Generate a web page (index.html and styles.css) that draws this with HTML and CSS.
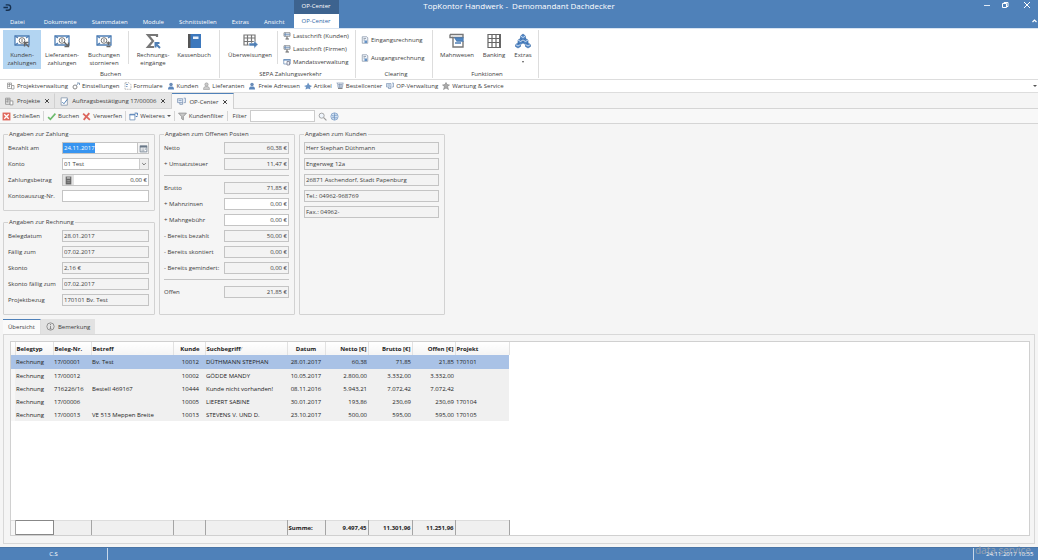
FILE: index.html
```html
<!DOCTYPE html>
<html lang="de">
<head>
<meta charset="utf-8">
<title>TopKontor Handwerk</title>
<link rel="stylesheet" href="styles.css">
</head>
<body>
<svg class="sprite" aria-hidden="true">
  <symbol id="note" viewBox="0 0 16 16"><path d="M1 3h14v9H1z" fill="#fff" stroke="#4f7fb5" stroke-width="1.3"/><path d="M1 3l3 2M15 3l-3 2M1 12l3-2" stroke="#4f7fb5" stroke-width="1.4"/><circle cx="8" cy="7.500" r="2.800" fill="none" stroke="#777"/><path d="M8 6v3" stroke="#777"/></symbol>
  <symbol id="note-in" viewBox="0 0 16 16"><use href="#note"/><path d="M15 14l-4-4M10.500 13.500V9.500h4" fill="none" stroke="#666" stroke-width="1.400"/></symbol>
  <symbol id="note-out" viewBox="0 0 16 16"><use href="#note"/><path d="M10 9l4 4M14.500 9.500v4h-4" fill="none" stroke="#666" stroke-width="1.400"/></symbol>
  <symbol id="note-plus" viewBox="0 0 16 16"><use href="#note"/><path d="M12.500 8.500v3.500M10.500 10h4M10.500 13.500h4" stroke="#666" stroke-width="1.300"/></symbol>
  <symbol id="sigma" viewBox="0 0 16 16"><path d="M12 4V2H3l5 6-5 6h6" fill="none" stroke="#777" stroke-width="2.200"/><path d="M15 15l-4-4M10.500 14.500V10h4" fill="none" stroke="#4f7fb5" stroke-width="2"/></symbol>
  <symbol id="book" viewBox="0 0 16 16"><path d="M2 1h13v14H2z" fill="#3c78bd"/><path d="M2 1h2.500v14H2z" fill="#555"/><path d="M7 3.500h5.500v2.500H7z" fill="#e8f0fa"/></symbol>
  <symbol id="transfer" viewBox="0 0 16 16"><path d="M2 2h11v10H2zM2 5h11M2 8.500h11M5.500 2v10M9.500 2v10" fill="none" stroke="#777" stroke-width="1.200"/><path d="M7 10h5V7.500l4 4-4 4V13H7z" fill="#4f7fb5" stroke="#fff" stroke-width=".5"/></symbol>
  <symbol id="pc" viewBox="0 0 16 16"><path d="M2 1.500h12v7H2z" fill="#dce8f5" stroke="#777" stroke-width="1.500"/><path d="M5 1v8M2 5h12" stroke="#6c8db5" stroke-width="1.300"/><path d="M8 9v4M5 14h7" fill="none" stroke="#666" stroke-width="2.200"/></symbol>
  <symbol id="sheet" viewBox="0 0 16 16"><path d="M1.500 3h13v9h-13z" fill="#fff" stroke="#6c8db5" stroke-width="1.500"/><path d="M1 4h14" stroke="#4f7fb5" stroke-width="2"/><path d="M8 7h5v7H8z" fill="#e9eef5" stroke="#778" stroke-width="1.500"/></symbol>
  <symbol id="invoice" viewBox="0 0 16 16"><path d="M2.500 1.500h9l2 2v11h-11z" fill="#eef3fa" stroke="#8291a5" stroke-width="1.400"/><path d="M5 5h5M5 8h3" stroke="#7d8794" stroke-width="1.400"/><path d="M7 9h5v5H7z" fill="#6592c5"/></symbol>
  <symbol id="dunning" viewBox="0 0 16 16"><path d="M1 1.500h13v3H4V14h10V8" fill="none" stroke="#777" stroke-width="1.400"/><path d="M6 5h8v3H8zM6 10h6" fill="#4f8ac9" stroke="#4f7fb5" stroke-width="1.300"/><path d="M1 1.500v3h3" fill="none" stroke="#777" stroke-width="1.400"/></symbol>
  <symbol id="bank" viewBox="0 0 16 16"><path d="M2 1.500h12v13H2zM2 5.500h12M2 9.500h12M6 1.500v13M10 1.500v13" fill="none" stroke="#666" stroke-width="1.200"/><path d="M14 1v14" stroke="#666" stroke-width="2"/></symbol>
  <symbol id="cubes" viewBox="0 0 16 16"><g fill="#4f86c6" stroke="#3c6ba5" stroke-width=".6"><path d="M5.500 3L8 1l2.500 2v3L8 8 5.500 6zM3 7l2.500-1.500L8 7v3l-2.500 1.500L3 10zM8 7l2.500-1.500L13 7v3l-2.500 1.500L8 10zM.5 11.500L3 10l2.500 1.500v2L3 15 .5 13.500zM10.500 11.500L13 10l2.500 1.500v2L13 15l-2.500-1.500z"/></g><path d="M5.500 3L8 4.500 10.500 3M3 7l2.500 1.500L8 7l2.500 1.500L13 7M.5 11.500L3 13l2.500-1.500M10.500 11.500L13 13l2.500-1.500" fill="none" stroke="#fff" stroke-width=".7"/></symbol>
  <symbol id="project" viewBox="0 0 16 16"><path d="M1 2h8v11H1zM1 5h8M1 8.500h5M5 2v8" fill="none" stroke="#888" stroke-width="1.300"/><path d="M9 14V7h5v7z" fill="#fff" stroke="#888" stroke-width="1.400"/></symbol>
  <symbol id="gear" viewBox="0 0 16 16"><circle cx="6" cy="10" r="4" fill="none" stroke="#888" stroke-width="2"/><path d="M9 7l3-4M10 2h5v4" fill="none" stroke="#6b88aa" stroke-width="1.600"/></symbol>
  <symbol id="form" viewBox="0 0 16 16"><path d="M2 1.500h8l4 4v9H2z" fill="none" stroke="#999" stroke-width="1.300" stroke-dasharray="4 1.500"/><path d="M4 5h4M4 9h3" stroke="#4f7fb5" stroke-width="1.500"/></symbol>
  <symbol id="person" viewBox="0 0 16 16"><circle cx="8" cy="5" r="3.500" fill="#6a8cb8"/><path d="M2 15c0-5 2-6 6-6s6 1 6 6z" fill="#5b86bb"/></symbol>
  <symbol id="supplier" viewBox="0 0 16 16"><circle cx="9" cy="5" r="3.300" fill="#ccc" stroke="#888"/><path d="M3 15c0-5 2-6 6-6s6 1 6 6z" fill="#ccc" stroke="#888"/></symbol>
  <symbol id="article" viewBox="0 0 16 16"><path d="M8 1l3 5 5 2-4 3 1 4-5-2-5 2 1-5-4-2 6-2z" fill="#6c94c4"/></symbol>
  <symbol id="cart" viewBox="0 0 16 16"><path d="M1 2h14M3 2l1 9h9l1-9M4 5h9M4 8h9M7 3v8M10 3v8" fill="none" stroke="#7d93b0" stroke-width="1.300"/><path d="M4 13h9" stroke="#888" stroke-width="2"/></symbol>
  <symbol id="op" viewBox="0 0 16 16"><path d="M1 3h9v7H1zM12 2h3v8h-3" fill="#e2ecf7" stroke="#7890b0" stroke-width="1.300"/><path d="M3 6h5M5 10v3h5v-3" fill="none" stroke="#6c89ae" stroke-width="1.300"/></symbol>
  <symbol id="service" viewBox="0 0 16 16"><path d="M8 1l2 4 5 1-4 3 2 6-5-3-5 3 2-6-4-3 5-1z" fill="#aaa" stroke="#777"/></symbol>
  <symbol id="order" viewBox="0 0 16 16"><path d="M2 1.500h11v13H2z" fill="#fff" stroke="#8294aa" stroke-width="1.400"/><path d="M4 9l3 3 6-8" fill="none" stroke="#4f7fb5" stroke-width="1.700"/></symbol>
  <symbol id="stop" viewBox="0 0 16 16"><path d="M1 1h14v14H1z" fill="#e0685c"/><path d="M4 4l8 8M12 4l-8 8" stroke="#fff" stroke-width="2.400"/></symbol>
  <symbol id="check" viewBox="0 0 16 16"><path d="M2 9l4 4 9-10" fill="none" stroke="#6dbb6d" stroke-width="3"/></symbol>
  <symbol id="cross" viewBox="0 0 16 16"><path d="M2 3l12 11M13 2L3 14" stroke="#dc665e" stroke-width="3.200"/></symbol>
  <symbol id="more" viewBox="0 0 16 16"><path d="M1.500 4h9v10h-9z" fill="#fff" stroke="#7191b8" stroke-width="1.500"/><path d="M1 5h10M10 2h5v4M12 8h3" stroke="#4678b5" stroke-width="1.700" fill="none"/></symbol>
  <symbol id="funnel" viewBox="0 0 16 16"><path d="M1 2h14L9.500 8v6l-3-2V8z" fill="#c8c8c8" stroke="#888" stroke-width="1.400"/></symbol>
  <symbol id="lens" viewBox="0 0 16 16"><circle cx="6.500" cy="6.500" r="4.500" fill="#eef4fb" stroke="#999" stroke-width="1.500"/><path d="M10 10l5 5" stroke="#999" stroke-width="2"/></symbol>
  <symbol id="globe" viewBox="0 0 16 16"><circle cx="8" cy="8" r="6.500" fill="#d5e3f3" stroke="#86a5cb" stroke-width="1.500"/><path d="M3 6c4 3 7-2 10 0M3 11c3-3 7 1 10-1M8 2v12" fill="none" stroke="#6e93c0" stroke-width="1.300"/></symbol>
  <symbol id="calendar" viewBox="0 0 16 16"><path d="M2 3h12v11H2z" fill="#fff" stroke="#678" stroke-width="1.400"/><path d="M2 5h12" stroke="#567" stroke-width="2.400"/><path d="M4.500 9h2M7.500 9h2M4.500 12h2M7.500 12h2M10.500 9h2" stroke="#678" stroke-width="1.500"/></symbol>
  <symbol id="calc" viewBox="0 0 16 16"><path d="M3 1h10v14H3z" fill="#666"/><path d="M5 3.500h6" stroke="#ddd" stroke-width="2"/><path d="M5 8h6M5 11h6" stroke="#bbb" stroke-width="1.300" stroke-dasharray="1.500 .7"/></symbol>
  <symbol id="info" viewBox="0 0 16 16"><circle cx="8" cy="8" r="6.500" fill="none" stroke="#777" stroke-width="1.300"/><path d="M8 7v5M8 3.500v2M6.500 12h3" stroke="#777" stroke-width="1.500"/></symbol>
  <symbol id="close" viewBox="0 0 16 16"><path d="M3 3l10 10M13 3L3 13" stroke="currentColor" stroke-width="2.600"/></symbol>
</svg>

<header class="header">
  <div class="header-left">
    <svg class="logo" viewBox="0 0 20 18"><path d="M6 3h5a6 6 0 0 1 0 12H6M1 9h10" fill="none" stroke="#16304f" stroke-width="3"/></svg>
    <nav class="menu">
      <button class="menu-file">Datei</button><button>Dokumente</button><button>Stammdaten</button><button>Module</button><button>Schnittstellen</button><button>Extras</button><button>Ansicht</button>
      <div class="context"><span class="context-title">OP-Center</span><button class="context-tab">OP-Center</button></div>
    </nav>
  </div>
  <h1 class="app-title">TopKontor Handwerk -&nbsp; Demomandant Dachdecker</h1>
  <div class="window-tools">
    <div class="window-buttons">
      <button aria-label="Minimieren"><svg viewBox="0 0 8 8"><path d="M1 4.500h6" stroke="#dfe9f4"/></svg></button>
      <button aria-label="Wiederherstellen"><svg viewBox="0 0 8 8"><path d="M1.500 2.500h4v4h-4zM3 2.500v-1h4v4H5.500" fill="none" stroke="#fff"/></svg></button>
      <button class="close-window" aria-label="Beenden"><svg viewBox="0 0 8 8"><path d="M1 1l6 6M7 1L1 7" stroke="#fff"/></svg></button>
    </div>
    <button class="collapse" aria-label="Menüband einklappen"><svg viewBox="0 0 8 8"><path d="M2.500 5L4.500 3l2 2" fill="none" stroke="#fff" stroke-width="1.200"/></svg></button>
  </div>
</header>

<section class="ribbon">
  <div class="group group-book">
    <div class="group-items">
      <button class="big active"><svg><use href="#note-in"/></svg><span>Kunden-<br>zahlungen</span></button>
      <button class="big"><svg><use href="#note-out"/></svg><span>Lieferanten-<br>zahlungen</span></button>
      <button class="big"><svg><use href="#note-plus"/></svg><span>Buchungen<br>stornieren</span></button>
      <i class="divider"></i>
      <button class="big narrow"><svg><use href="#sigma"/></svg><span>Rechnungs-<br>eingänge</span></button>
      <button class="big"><svg><use href="#book"/></svg><span>Kassenbuch</span></button>
    </div>
    <span class="group-name">Buchen</span>
  </div>
  <div class="group group-sepa">
    <div class="group-items">
      <button class="big wide"><svg><use href="#transfer"/></svg><span>Überweisungen</span></button>
      <i class="divider"></i>
      <div class="stack">
        <button class="small"><svg><use href="#pc"/></svg>Lastschrift (Kunden)</button>
        <button class="small"><svg><use href="#pc"/></svg>Lastschrift (Firmen)</button>
        <button class="small"><svg><use href="#sheet"/></svg>Mandatsverwaltung</button>
      </div>
    </div>
    <span class="group-name">SEPA Zahlungsverkehr</span>
  </div>
  <div class="group group-clearing">
    <div class="group-items">
      <div class="stack loose">
        <button class="small"><svg><use href="#invoice"/></svg>Eingangsrechnung</button>
        <button class="small"><svg><use href="#invoice"/></svg>Ausgangsrechnung</button>
      </div>
    </div>
    <span class="group-name">Clearing</span>
  </div>
  <div class="group group-functions">
    <div class="group-items">
      <button class="big"><svg><use href="#dunning"/></svg><span>Mahnwesen</span></button>
      <button class="big slim"><svg><use href="#bank"/></svg><span>Banking</span></button>
      <button class="big slim"><svg><use href="#cubes"/></svg><span>Extras</span><i class="caret"></i></button>
    </div>
    <span class="group-name">Funktionen</span>
  </div>
</section>

<nav class="quick">
  <button><svg><use href="#project"/></svg>Projektverwaltung</button>
  <button><svg><use href="#gear"/></svg>Einstellungen</button>
  <button><svg><use href="#form"/></svg>Formulare</button>
  <button><svg><use href="#person"/></svg>Kunden</button>
  <button><svg><use href="#supplier"/></svg>Lieferanten</button>
  <button><svg><use href="#person"/></svg>Freie Adressen</button>
  <button><svg><use href="#article"/></svg>Artikel</button>
  <button><svg><use href="#cart"/></svg>Bestellcenter</button>
  <button><svg><use href="#op"/></svg>OP-Verwaltung</button>
  <button><svg><use href="#service"/></svg>Wartung &amp; Service</button>
  <i class="caret overflow"></i>
</nav>

<div class="documents">
  <div class="document"><svg><use href="#project"/></svg><span>Projekte</span><button aria-label="Projekte schließen"><svg><use href="#close"/></svg></button></div>
  <div class="document"><svg><use href="#order"/></svg><span>Auftragsbestätigung 17/00006</span><button aria-label="Auftragsbestätigung schließen"><svg><use href="#close"/></svg></button></div>
  <div class="document current"><svg><use href="#op"/></svg><span>OP-Center</span><button aria-label="OP-Center schließen"><svg><use href="#close"/></svg></button></div>
</div>

<div class="actions">
  <button><svg><use href="#stop"/></svg>Schließen</button><i></i>
  <button><svg><use href="#check"/></svg>Buchen</button>
  <button><svg><use href="#cross"/></svg>Verwerfen</button><i></i>
  <button><svg><use href="#more"/></svg>Weiteres<b class="caret"></b></button><i></i>
  <button><svg><use href="#funnel"/></svg>Kundenfilter</button><i></i>
  <label for="filter">Filter</label><input id="filter" type="text">
  <button aria-label="Suchen"><svg><use href="#lens"/></svg></button>
  <button aria-label="Online"><svg><use href="#globe"/></svg></button>
</div>

<main class="content">
  <form class="forms">
    <div class="form-column">
      <fieldset>
        <legend>Angaben zur Zahlung</legend>
        <div class="fields">
          <label for="paid">Bezahlt am</label><div class="combo"><input id="paid" class="marked" value="24.11.2017"><button type="button" aria-label="Kalender"><svg><use href="#calendar"/></svg></button></div>
          <label for="account">Konto</label><div class="combo"><select id="account"><option>01 Test</option></select><svg class="chevron" viewBox="0 0 9 10"><path d="M2.500 4l2 2 2-2" fill="none" stroke="#666"/></svg></div>
          <label for="amount">Zahlungsbetrag</label><div class="combo"><button type="button" class="calculator" aria-label="Rechner"><svg><use href="#calc"/></svg></button><input id="amount" class="number" value="0,00 €"></div>
          <label for="statement">Kontoauszug-Nr.</label><input id="statement">
        </div>
      </fieldset>
      <fieldset>
        <legend>Angaben zur Rechnung</legend>
        <div class="fields">
          <label for="r1">Belegdatum</label><input id="r1" readonly value="28.01.2017">
          <label for="r2">Fällig zum</label><input id="r2" readonly value="07.02.2017">
          <label for="r3">Skonto</label><input id="r3" readonly value="2,16 €">
          <label for="r4">Skonto fällig zum</label><input id="r4" readonly value="07.02.2017">
          <label for="r5">Projektbezug</label><input id="r5" readonly value="170101 Bv. Test">
        </div>
      </fieldset>
    </div>
    <fieldset class="posten">
      <legend>Angaben zum Offenen Posten</legend>
      <div class="fields">
        <label for="p1">Netto</label><input id="p1" class="number" readonly value="60,38 €">
        <label for="p2">+ Umsatzsteuer</label><input id="p2" class="number" readonly value="11,47 €">
        <hr>
        <label for="p3">Brutto</label><input id="p3" class="number" readonly value="71,85 €">
        <label for="p4">+ Mahnzinsen</label><input id="p4" class="number" value="0,00 €">
        <label for="p5">+ Mahngebühr</label><input id="p5" class="number" value="0,00 €">
        <label for="p6">- Bereits bezahlt</label><input id="p6" class="number" readonly value="50,00 €">
        <label for="p7">- Bereits skontiert</label><input id="p7" class="number" readonly value="0,00 €">
        <label for="p8">- Bereits gemindert:</label><input id="p8" class="number" readonly value="0,00 €">
        <hr>
        <label for="p9">Offen</label><input id="p9" class="number" readonly value="21,85 €">
      </div>
    </fieldset>
    <fieldset class="customer">
      <legend>Angaben zum Kunden</legend>
      <div class="lines">
        <input aria-label="Name" readonly value="Herr Stephan Düthmann">
        <input aria-label="Straße" readonly value="Engerweg 12a">
        <input aria-label="Ort" readonly value="26871 Aschendorf, Stadt Papenburg">
        <input aria-label="Telefon" readonly value="Tel.: 04962-968769">
        <input aria-label="Fax" readonly value="Fax.: 04962-">
      </div>
    </fieldset>
  </form>

  <div class="tabs">
    <button class="tab selected">Übersicht</button>
    <button class="tab"><svg><use href="#info"/></svg>Bemerkung</button>
  </div>
  <section class="panel">
    <div class="grid">
      <table class="records">
        <colgroup><col class="c-gutter"><col class="c-type"><col class="c-no"><col class="c-subject"><col class="c-customer"><col class="c-term"><col class="c-date"><col class="c-net"><col class="c-gross"><col class="c-open"><col class="c-project"></colgroup>
        <thead><tr><th></th><th>Belegtyp</th><th>Beleg-Nr.</th><th>Betreff</th><th class="num">Kunde</th><th>Suchbegriff<small>⁄</small></th><th class="mid">Datum</th><th class="num">Netto [€]</th><th class="num">Brutto [€]</th><th class="num">Offen [€]</th><th>Projekt</th></tr></thead>
        <tbody>
          <tr class="selected"><td></td><td>Rechnung</td><td>17/00001</td><td>Bv. Test</td><td class="num">10012</td><td>DÜTHMANN STEPHAN</td><td class="mid">28.01.2017</td><td class="num">60,38</td><td class="num">71,85</td><td class="num">21,85</td><td>170101</td></tr>
          <tr><td></td><td>Rechnung</td><td>17/00012</td><td></td><td class="num">10002</td><td>GÖDDE MANDY</td><td class="mid">10.05.2017</td><td class="num">2.800,00</td><td class="num">3.332,00</td><td class="num">3.332,00</td><td></td></tr>
          <tr><td></td><td>Rechnung</td><td>716226/16</td><td>Bestell 469167</td><td class="num">10444</td><td>Kunde nicht vorhanden!</td><td class="mid">08.11.2016</td><td class="num">5.943,21</td><td class="num">7.072,42</td><td class="num">7.072,42</td><td></td></tr>
          <tr><td></td><td>Rechnung</td><td>17/00006</td><td></td><td class="num">10005</td><td>LIEFERT SABINE</td><td class="mid">30.01.2017</td><td class="num">193,86</td><td class="num">230,69</td><td class="num">230,69</td><td>170104</td></tr>
          <tr><td></td><td>Rechnung</td><td>17/00013</td><td>VE 513 Meppen Breite</td><td class="num">10013</td><td>STEVENS V. UND D.</td><td class="mid">23.10.2017</td><td class="num">500,00</td><td class="num">595,00</td><td class="num">595,00</td><td>170105</td></tr>
        </tbody>
      </table>
      <table class="records totals">
        <colgroup><col class="c-gutter"><col class="c-type"><col class="c-no"><col class="c-subject"><col class="c-customer"><col class="c-term"><col class="c-date"><col class="c-net"><col class="c-gross"><col class="c-open"><col class="c-project"></colgroup>
        <tbody><tr><td></td><td class="focus"></td><td></td><td></td><td></td><td></td><td>Summe:</td><td class="num">9.497,45</td><td class="num">11.301,96</td><td class="num">11.251,96</td><td></td></tr></tbody>
      </table>
    </div>
  </section>
</main>

<footer class="status">
  <span class="user">C.S</span>
  <span class="clock">24.11.2017 10:55<em>data service</em></span>
</footer>
</body>
</html>
```
FILE: styles.css
```css
* { box-sizing: border-box; }

body {
  margin: 0;
  height: 100vh;
  display: flex;
  flex-direction: column;
  overflow: hidden;
  background: #f5f5f5;
  color: #3c3c3c;
  font: 6px/8px "Open Sans", "Noto Sans", sans-serif;
}

button, input, select { font: inherit; color: inherit; margin: 0; padding: 0; border: 0; background: none; border-radius: 0; }
button { display: flex; align-items: center; white-space: nowrap; }
svg { display: block; flex: none; width: 9px; height: 9px; }
.sprite { position: absolute; width: 0; height: 0; }
.caret { border: 2px solid transparent; border-top-color: #555; border-bottom: 0; }

/* Title bar */
.header { display: grid; grid-template-columns: 1fr auto 1fr; height: 28px; flex: none; background: #4f81b9; color: #fff; }
.header-left { display: flex; flex-direction: column; justify-content: space-between; }
.logo { width: 9px; height: 9px; margin: 3px 0 0 3px; }
.menu { display: flex; align-items: flex-end; height: 28px; margin-top: -12px; }
.menu button { height: 13px; padding: 0 8px 0 7px; }
.menu .menu-file { padding: 0 12px 0 10px; }
.context { width: 45px; margin-left: 1px; align-self: stretch; display: flex; flex-direction: column; text-align: center; }
.context-title { flex: 1; background: #3d638f; line-height: 12px; }
.menu .context-tab { height: 14px; padding: 0; background: #fff; color: #2f67a8; justify-content: center; }
.app-title { margin: 0; font-size: 8px; font-weight: 400; line-height: 12px; }
.window-tools { display: flex; flex-direction: column; align-items: flex-end; }
.window-buttons { display: flex; gap: 10px; padding: 1px 7px 0 0; }
.window-tools svg { width: 8px; height: 8px; }
.close-window { margin-left: 4px; }
.collapse { margin-top: 8px; }

/* Ribbon */
.ribbon { display: flex; height: 52px; flex: none; background: #fff; border-top: 1px solid #d8e4f2; border-bottom: 1px solid #ddd; }
.group { display: flex; flex-direction: column; padding: 0 1px; margin: 1px 0; border-right: 1px solid #ddd; }
.group-items { flex: 1; display: flex; }
.group-name { text-align: center; line-height: 8px; }
.group-book { width: 220px; padding-left: 3px; }
.group-sepa { width: 136px; padding-left: 7px; }
.group-clearing { width: 77px; padding-left: 5px; }
.group-functions { width: 106px; padding-left: 4px; }
.big { flex-direction: column; width: 42px; height: 39px; padding-top: 3px; text-align: center; }
.big:first-child { width: 38px; }
.big.narrow { width: 40px; }
.big.wide { width: 46px; }
.group-functions .big:first-child { width: 40px; }
.big.slim { width: 34px; }
.group-functions .slim:last-child { width: 24px; }
.big svg { width: 16px; height: 16px; margin-bottom: 2px; }
.big .caret { margin-top: 2px; border-width: 1px; border-top-width: 2px; }
.big.active { background: #b3d5f2; }
.divider { width: 1px; margin: 1px 4px 6px 3px; background: #ddd; }
.group-sepa .divider { margin-left: 4px; margin-right: 5px; }
.stack { display: flex; flex-direction: column; justify-content: space-between; padding: 2px 0; height: 38px; }
.stack.loose { padding: 6px 0; }
.small { gap: 2px; }
.small svg { width: 8px; height: 8px; }

/* Quick access */
.quick { display: flex; align-items: center; gap: 4px; height: 13px; flex: none; padding: 0 1px 0 7px; background: #fff; border-bottom: 1px solid #ddd; }
.quick button { gap: 2px; }
.quick svg { width: 8px; height: 8px; }
.overflow { margin-left: auto; }

/* Open documents */
.documents { display: flex; height: 16px; flex: none; border-bottom: 1px solid #d5d5d5; }
.document { display: flex; align-items: center; gap: 3px; padding: 0 4px 0 5px; background: #e6e6e6; border-right: 1px solid #d0d0d0; border-top: 1px solid transparent; }
.document > span { margin-right: 1px; }
.document button svg { width: 6px; height: 6px; }
.document + .document { padding-left: 5px; padding-right: 5px; }
.document.current { margin-bottom: -1px; background: #f8f8f8; border-top: 1px solid #4f81b9; }

/* Actions */
.actions { display: flex; align-items: center; gap: 3px; height: 15px; flex: none; padding-left: 2px; background: #f8f8f8; border-bottom: 1px solid #d5d5d5; }
.actions button { gap: 2px; }
.actions i { width: 1px; height: 10px; background: #d5d5d5; }
.actions label { margin-left: 2px; }
.actions input { width: 65px; height: 12px; background: #fff; border: 1px solid #ccc; }

/* Forms */
.content { flex: 1; display: flex; flex-direction: column; padding: 6px 3px 3px; min-height: 0; }
.forms { display: flex; gap: 4px; }
.form-column { width: 152px; display: flex; flex-direction: column; gap: 7px; }
fieldset { margin: 0; min-width: 0; padding: 4px 5px 8px 4px; border: 1px solid #d2d2d2; border-radius: 1px; }
legend { padding: 0 1px; line-height: 8px; }
.posten { width: 136px; }
.customer { width: 146px; }
.fields { display: grid; grid-template-columns: 54px 1fr; gap: 4px 0; align-items: center; }
.posten .fields { grid-template-columns: 60px 1fr; }
.fields label { white-space: nowrap; }
.fields input, .combo, .lines input { width: 100%; height: 12px; }
.fields > input, .combo, .lines input { border: 1px solid #c4c4c4; }
.fields input, .lines input, .combo { padding: 0 1px; background: #fff; }
.fields input[readonly], .lines input { background: #f3f3f3; }
.fields .combo { display: flex; padding: 0; }
.combo input { height: 10px; flex: 1; min-width: 0; }
.combo button { width: 11px; justify-content: center; border-left: 1px solid #c4c4c4; background: #f4f4f4; }
.combo .calculator { border: 0; background: #e2e2e2; }
.fields input.marked { color: #fff; background: linear-gradient(#3794f0, #3794f0) no-repeat 0 0 / 32px 10px #fff; }
.combo select { flex: 1; appearance: none; padding: 0 1px; }
.chevron { height: 10px; background: #eee; border-left: 1px solid #ccc; pointer-events: none; }
.fields .number { text-align: right; }
.fields hr { grid-column: 1 / -1; width: 100%; margin: 1px 0 2px; border: 0; border-top: 1px solid #c4c4c4; }
.lines { display: grid; gap: 4px; }

/* Tabs and grid */
.tabs { display: flex; margin-top: 4px; }
.tab { height: 15px; gap: 3px; padding: 0 5px; background: #e2e2e2; }
.tab.selected { background: #fafafa; border-top: 1px solid #4f81b9; border-right: 1px solid #ddd; }
.panel { flex: 1; display: flex; padding: 6px 4px 7px 6px; border: 1px solid #d8d8d8; min-height: 0; }
.grid { flex: 1; display: flex; flex-direction: column; justify-content: space-between; background: #fff; border: 1px solid #d0d0d0; }
.records { width: 498px; table-layout: fixed; border-collapse: collapse; }
.c-gutter { width: 4px; }
.c-type, .c-no { width: 38px; }
.c-subject, .c-term { width: 82px; }
.c-customer { width: 32px; }
.c-date { width: 38px; }
.c-net, .c-open { width: 43px; }
.c-gross { width: 44px; }
.c-project { width: 54px; }
.records th, .records td { height: 13px; padding: 0 1px; text-align: left; white-space: nowrap; line-height: 8px; color: #222; }
.records th { font-weight: 700; background: linear-gradient(#fff, #f4f4f4); border-right: 1px solid #e2e2e2; }
.records th small { font-size: 6px; font-weight: 400; color: #888; }
.records tbody { background: #f0f0f0; }
.records tr.selected td { height: 14px; background: #a9c2e6; }
.records td:first-child { background: #f7f7f7; padding: 0; }
.records .num { text-align: right; }
.records td.num:nth-child(5) { padding-right: 6px; }
.records th.num:nth-child(5) { padding-right: 5px; }
.records .mid { text-align: center; }
.totals td { height: 14px; font-weight: 700; border-right: 1px solid #a5a5a5; border-top: 1px solid #ddd; }
.totals td:first-child { padding: 0; }
.totals td.focus { background: #fff; border: 1px solid #888; }

/* Status bar */
.status { display: flex; justify-content: space-between; height: 13px; flex: none; background: #4f81b9; color: #fff; border-top: 1px solid #4a75a6; line-height: 12px; }
.user { width: 108px; text-align: center; border-right: 1px solid #c8d8ea; }
.clock { position: relative; width: 65px; padding-left: 12px; border-left: 1px solid #c8d8ea; white-space: nowrap; }
.clock em { position: absolute; left: 1px; top: -4px; font-size: 10px; font-style: normal; color: #a9abae; opacity: .8; }
```
